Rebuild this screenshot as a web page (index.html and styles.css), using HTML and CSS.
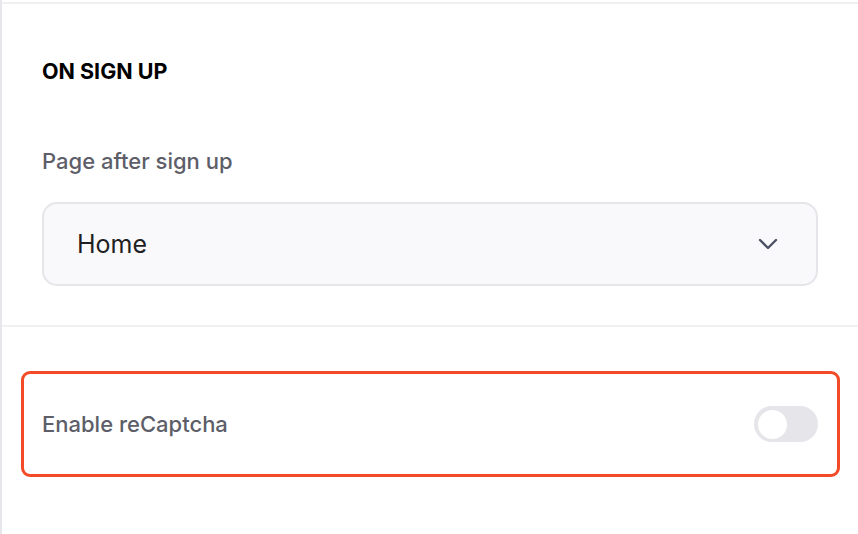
FILE: index.html
```html
<!DOCTYPE html>
<html>
<head>
<meta charset="utf-8">
<link rel="stylesheet" href="styles.css">
</head>
<body>
<div class="panel">
  <section class="section signup">
    <h2 class="heading">ON SIGN UP</h2>
    <label class="label">Page after sign up</label>
    <div class="select">
      <span class="select-value">Home</span>
      <svg class="chevron" width="20" height="12" viewBox="0 0 20 12" fill="none">
        <path d="M2 2 L10 10 L18 2" stroke="#4b5265" stroke-width="2.4" stroke-linecap="round" stroke-linejoin="round"/>
      </svg>
    </div>
  </section>
  <section class="section captcha">
    <div class="highlight">
      <span class="label">Enable reCaptcha</span>
      <span class="toggle"><span class="knob"></span></span>
    </div>
  </section>
</div>
</body>
</html>
```

FILE: styles.css
```css
html, body {
  margin: 0;
  padding: 0;
  background: #ffffff;
  font-family: Inter, "Noto Sans", sans-serif;
}
.panel {
  width: 858px;
  height: 534px;
  border-left: 2px solid #e6e6eb;
  background: #fff;
  box-sizing: border-box;
  padding-top: 2px;
}
.section {
  box-sizing: border-box;
}
.signup {
  border-top: 2px solid #f0f0f2;
  border-bottom: 2px solid #f0f0f2;
  padding: 54px 40px 39px 40px;
}
.heading {
  margin: 0;
  font-size: 21.5px;
  font-weight: 700;
  color: #000000;
  line-height: 26px;
}
.label {
  display: block;
  margin-top: 63px;
  font-size: 22px;
  font-weight: 500;
  color: #5d5e68;
  line-height: 28px;
}
.select {
  margin-top: 27px;
  height: 84px;
  box-sizing: border-box;
  border: 2px solid #e5e5ea;
  border-radius: 15px;
  background: #f9f9fb;
  display: flex;
  align-items: center;
  justify-content: space-between;
  padding: 0 38px 0 33px;
}
.select-value {
  font-size: 25px;
  color: #1f1f23;
  font-weight: 400;
}
.chevron {
  display: block;
}
.captcha {
  padding: 44px 18px 0 19px;
}
.highlight {
  height: 106px;
  box-sizing: border-box;
  border: 3px solid #f34a28;
  border-radius: 9px;
  display: flex;
  align-items: center;
  justify-content: space-between;
  padding: 0 19px 0 18px;
}
.highlight .label {
  margin-top: 0;
}
.toggle {
  width: 64px;
  height: 36px;
  border-radius: 18px;
  background: #e5e5ea;
  display: flex;
  align-items: center;
  padding: 0 4px;
  box-sizing: border-box;
}
.knob {
  width: 29px;
  height: 29px;
  border-radius: 50%;
  background: #fff;
}
```
